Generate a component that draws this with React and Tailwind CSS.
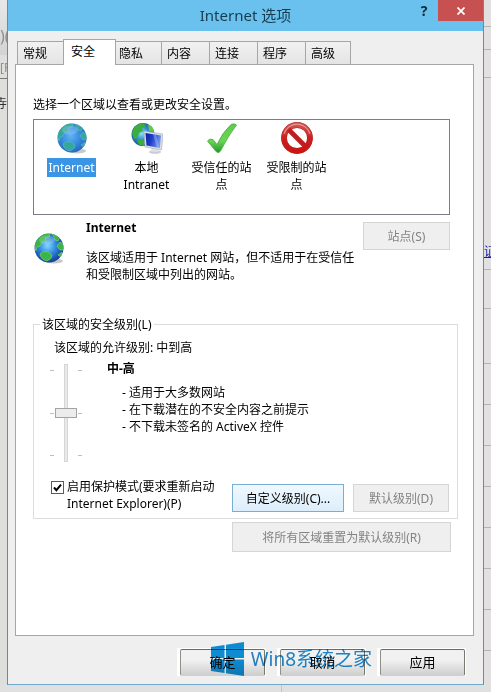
import { useState } from "react";

const tabs = ["常规", "安全", "隐私", "内容", "连接", "程序", "高级"];

const rowLines = [27, 23, 28, 192, 39, 55, 41, 41, 41, 41, 41, 41, 41];

function Globe({ id, light, className }) {
  return (
    <svg viewBox="0 0 32 32" className={className} aria-hidden="true">
      <defs>
        <radialGradient id={id} cx="45%" cy="42%" r="60%">
          <stop offset="0" stopColor={light ? "#5fb4f2" : "#7fd8ff"} />
          <stop offset="0.5" stopColor={light ? "#3a8fe0" : "#2f86dc"} />
          <stop offset="1" stopColor={light ? "#2467bd" : "#143a94"} />
        </radialGradient>
        <clipPath id={`${id}-clip`}>
          <circle cx="16" cy="16" r="14.5" />
        </clipPath>
      </defs>
      <ellipse cx="21" cy="29" rx="9" ry="2.4" fill="#c5c9cd" />
      <circle cx="16" cy="16" r="14.5" fill={`url(#${id})`} />
      <g
        clipPath={`url(#${id}-clip)`}
        fill={light ? "#36a79c" : "#3bb54a"}
        stroke={light ? "#58bfd0" : "#86d86c"}
        strokeWidth="0.6"
      >
        <path d="M1 13 L3 6 L10 1 L17 2 L16 5 L12 6 L13 9 L9 10 L7 14 L4 15 L3 19 Z" />
        <path d="M19 2 L27 5 L25 9 L22 8 L21 5 Z" />
        <path d="M27 10 L31 13 L31 18 L27 18 L24 14 Z" />
        <path d="M7 22 Q10 18 15 20 L19 23 Q19 27 14 29 Q8 28 7 22 Z" />
        <path d="M25 23 L29 20 L28 25 Z" />
      </g>
      <ellipse cx="14" cy="8" rx="8" ry="4.5" fill="#ffffff" opacity="0.18" />
    </svg>
  );
}

function IntranetIcon() {
  return (
    <svg viewBox="0 0 32 32" className="size-8" aria-hidden="true">
      <defs>
        <radialGradient id="lan" cx="45%" cy="45%" r="60%">
          <stop offset="0" stopColor="#8fe0f5" />
          <stop offset="0.5" stopColor="#2f8bd0" />
          <stop offset="1" stopColor="#164c8c" />
        </radialGradient>
        <linearGradient id="screen" x1="0" y1="0" x2="1" y2="0.3">
          <stop offset="0" stopColor="#0b1fa0" />
          <stop offset="0.5" stopColor="#2040cc" />
          <stop offset="1" stopColor="#6f95ea" />
        </linearGradient>
      </defs>
      <circle cx="12" cy="12.5" r="11.5" fill="url(#lan)" />
      <path d="M1 11 Q3 2 12 1 L15 4 L11 6 L12 9 L8 11 L6 16 L3 17 Z" fill="#3dae3c" />
      <path d="M17 2 L22 6 L23 10 L18 9 Z" fill="#64c951" />
      <path d="M6 18 L11 17 L14 20 L13 24 L8 23 Z" fill="#3dae3c" />
      <ellipse cx="24" cy="30" rx="6" ry="1.8" fill="#c9ccd2" />
      <path d="M21 25 L26 26 L27 30 L20 29.5 Z" fill="#e0e2e8" />
      <path d="M13 9 L32 12 L30.5 28 L14 25 Z" fill="#d9dde6" stroke="#a5abb8" strokeWidth="0.6" />
      <path d="M14.5 11 L30 13.5 L28.8 26 L15.5 23.4 Z" fill="url(#screen)" />
      <path d="M22 12.3 L25 12.8 L28.8 26 L26 25.4 Z" fill="#a8c4fa" opacity="0.4" />
    </svg>
  );
}

function CheckIcon() {
  return (
    <svg viewBox="0 0 32 32" className="size-8" aria-hidden="true">
      <defs>
        <linearGradient id="tick" x1="0" y1="0" x2="0" y2="1">
          <stop offset="0" stopColor="#5fcb4c" />
          <stop offset="0.6" stopColor="#6ad455" />
          <stop offset="1" stopColor="#24952a" />
        </linearGradient>
      </defs>
      <path
        d="M1.5 19 Q3.5 16 7 17.5 L11 22.5 Q16 11 25 2.5 Q28 1 30.5 3 Q22 14 14.5 29 Q12.5 32 10 29.5 Z"
        fill="url(#tick)"
        stroke="#46ad3c"
        strokeWidth="0.8"
      />
    </svg>
  );
}

function ForbiddenIcon() {
  return (
    <svg viewBox="0 0 32 32" className="size-8" aria-hidden="true">
      <defs>
        <linearGradient id="ban" x1="0" y1="0" x2="0" y2="1">
          <stop offset="0" stopColor="#d4524f" />
          <stop offset="0.5" stopColor="#c9201f" />
          <stop offset="1" stopColor="#cc1512" />
        </linearGradient>
      </defs>
      <circle cx="16" cy="16" r="13" fill="#ffffff" stroke="#b3262a" strokeWidth="5.8" />
      <circle cx="16" cy="16" r="13" fill="none" stroke="url(#ban)" strokeWidth="4.8" />
      <path d="M7.5 7.5 L24.5 24.5" stroke="#c01d1f" strokeWidth="4.8" />
      <path d="M3 12 A13.5 13.5 0 0 1 29 12" fill="none" stroke="#f0b4b0" strokeWidth="1.2" opacity="0.7" />
    </svg>
  );
}

const zones = [
  { name: "Internet", icon: <Globe id="zone" light className="size-8" /> },
  { name: "本地 Intranet", icon: <IntranetIcon /> },
  { name: "受信任的站点", icon: <CheckIcon /> },
  { name: "受限制的站点", icon: <ForbiddenIcon /> },
];

function GrayButton({ className, children }) {
  return (
    <button
      type="button"
      disabled
      className={`border border-[#d5d5d5] bg-[#efefef] text-[#838383] ${className}`}
    >
      {children}
    </button>
  );
}

function FooterButton({ children }) {
  return (
    <div className="bg-white pt-px pr-px pl-[3px]">
      <button
        type="button"
        className="h-[27px] w-[85px] rounded-xs border border-t-[#6c6c5e] border-r-[#77776c] border-b-[#d0d0d0] border-l-[#8f8f88] bg-linear-to-b from-[#f1f1f1] from-40% to-[#cfcfcf] text-[13px] text-black"
      >
        {children}
      </button>
    </div>
  );
}

function Ticks() {
  return (
    <div className="flex w-1 flex-col justify-between py-1.5">
      <span className="h-px bg-[#bdbdbd]" />
      <span className="h-px bg-[#bdbdbd]" />
      <span className="h-px bg-[#bdbdbd]" />
    </div>
  );
}

function App() {
  const [tab, setTab] = useState("安全");
  const [zone, setZone] = useState("Internet");
  const [level, setLevel] = useState(3);
  const [protectedMode, setProtectedMode] = useState(true);

  return (
    <div className="grid min-h-screen grid-cols-[7px_minmax(0,1fr)_7px] grid-rows-[1fr_7px] overflow-hidden bg-[#e2e2e2] font-['Noto_Sans','Noto_Sans_CJK_SC',sans-serif] text-[12px] leading-[17px] text-black">
      {/* page behind the dialog, left edge */}
      <div className="overflow-hidden bg-[#dededd] text-[#8f8f8f]" aria-hidden="true">
        <div className="h-[55px] bg-linear-to-b from-[#e8e8e8] to-[#d2d4d3] pt-7 text-[16px] whitespace-nowrap">)(</div>
        <div className="h-6 border-b border-[#777777] pt-1 whitespace-nowrap">[F</div>
        <div className="flex justify-end pt-4 text-[#333333]">寺</div>
      </div>

      <main className="flex flex-col border-x border-b border-l-[#5c8db5] border-r-[#5c9396] border-b-[#6fa9cc] bg-[#efefef]">
        <header className="relative flex h-[31px] items-center justify-center bg-[#6bc1ee]">
          <h1 className="text-[15px] text-[#173c50]">Internet 选项</h1>
          <div className="absolute top-0 right-0 flex">
            <button type="button" aria-label="帮助" className="h-[21px] w-7 text-[14px] font-bold text-[#102a38]">
              ?
            </button>
            <button
              type="button"
              aria-label="关闭"
              className="flex h-[21px] w-[45px] items-center justify-center bg-[#c75050]"
            >
              <svg viewBox="0 0 8 8" className="size-2" aria-hidden="true">
                <path d="M0.5 0.5 L7.5 7.5 M7.5 0.5 L0.5 7.5" stroke="#ffffff" strokeWidth="1.7" />
              </svg>
            </button>
          </div>
        </header>

        <nav className="flex items-end pt-2 pl-[9px]" role="tablist">
          {tabs.map((name) => (
            <button
              key={name}
              type="button"
              role="tab"
              aria-selected={tab === name}
              onClick={() => setTab(name)}
              className={
                tab === name
                  ? "z-10 -mr-0.5 -mb-px -ml-px h-[26px] w-[53px] border border-b-0 border-[#a5a5aa] bg-white pb-0.5 pl-[7px] text-left"
                  : "-ml-px h-[23px] w-[49px] border border-b-0 border-[#a5a5aa] bg-linear-to-b from-[#f1f1f1] to-[#e4e4e4] pl-[5px] text-left first:ml-0 first:w-[47px] last:w-[46px]"
              }
            >
              {name}
            </button>
          ))}
        </nav>

        <section className="mr-[9px] ml-[7px] flex grow flex-col border border-[#a5a5aa] bg-white pt-[31px] pr-[15px] pb-[82px] pl-[17px]">
          <p>选择一个区域以查看或更改安全设置。</p>

          <div className="mt-1.5 mr-2 flex h-24 border border-[#7b7f85] pt-0.5" role="listbox">
            {zones.map((item) => (
              <button
                key={item.name}
                type="button"
                role="option"
                aria-selected={zone === item.name}
                onClick={() => setZone(item.name)}
                className="flex w-[75px] flex-col items-center gap-1"
              >
                {item.icon}
                <span
                  className={
                    zone === item.name
                      ? "bg-[#3a96e4] px-px py-px text-white"
                      : "max-w-[62px] py-px"
                  }
                >
                  {item.name}
                </span>
              </button>
            ))}
          </div>

          <div className="mr-2 flex items-start">
            <Globe id="current" className="mt-[17px] size-8" />
            <div className="ml-[21px] grow pt-1">
              <h2 className="font-bold">Internet</h2>
              <p className="mt-[13px] whitespace-nowrap">
                该区域适用于 Internet 网站，但不适用于在受信任
                <br />
                和受限制区域中列出的网站。
              </p>
            </div>
            <GrayButton className="mt-[7px] h-7 w-[87px] shrink-0">站点(S)</GrayButton>
          </div>

          <fieldset className="mt-[33px] border border-[#dcdcdc] pr-2 pb-1.5 pl-4">
            <legend className="-ml-2.5 px-0.5">该区域的安全级别(L)</legend>
            <p className="pt-1.5 pl-1">该区域的允许级别: 中到高</p>

            <div className="flex pt-2">
              <div className="flex h-[98px] w-8 justify-between">
                <Ticks />
                <input
                  type="range"
                  min="1"
                  max="5"
                  value={level}
                  onChange={(e) => setLevel(Number(e.target.value))}
                  aria-label="安全级别"
                  className="h-full w-[22px] appearance-none bg-transparent [direction:rtl] [writing-mode:vertical-lr] [&::-webkit-slider-runnable-track]:h-full [&::-webkit-slider-runnable-track]:w-1 [&::-webkit-slider-runnable-track]:border [&::-webkit-slider-runnable-track]:border-[#d6d6d6] [&::-webkit-slider-runnable-track]:bg-[#e7eaea] [&::-webkit-slider-thumb]:-ml-[10px] [&::-webkit-slider-thumb]:h-[10px] [&::-webkit-slider-thumb]:w-[22px] [&::-webkit-slider-thumb]:appearance-none [&::-webkit-slider-thumb]:border [&::-webkit-slider-thumb]:border-[#a3a3a3] [&::-webkit-slider-thumb]:bg-[#ececec]"
                />
                <Ticks />
              </div>
              <div className="-mt-1 ml-[25px]">
                <h3 className="font-bold">中-高</h3>
                <ul className="mt-[7px] pl-[15px]">
                  <li>- 适用于大多数网站</li>
                  <li>- 在下载潜在的不安全内容之前提示</li>
                  <li>- 不下载未签名的 ActiveX 控件</li>
                </ul>
              </div>
            </div>

            <div className="flex items-end pt-4">
              <div className="flex grow items-start gap-[3px]">
                <span className="relative mt-[3px] ml-px flex size-[13px] shrink-0">
                  <input
                    id="protected-mode"
                    type="checkbox"
                    checked={protectedMode}
                    onChange={(e) => setProtectedMode(e.target.checked)}
                    className="size-[13px] appearance-none border border-[#5c5c5c] bg-white"
                  />
                  {protectedMode && (
                    <svg viewBox="0 0 13 13" className="pointer-events-none absolute inset-0" aria-hidden="true">
                      <path d="M3 6.5 L5.4 9.2 L10 3.6" fill="none" stroke="#000000" strokeWidth="2" />
                    </svg>
                  )}
                </span>
                <label htmlFor="protected-mode" className="whitespace-nowrap">
                  启用保护模式(要求重新启动
                  <br />
                  Internet Explorer)(P)
                </label>
              </div>
              <button
                type="button"
                className="h-7 w-28 shrink-0 border border-[#78aed0] bg-linear-to-b from-[#f0f8fe] to-[#dceefb]"
              >
                自定义级别(C)...
              </button>
              <GrayButton className="ml-[9px] h-7 w-24 shrink-0">默认级别(D)</GrayButton>
            </div>
          </fieldset>

          <GrayButton className="mt-[3px] mr-[7px] h-[30px] w-[219px] self-end">
            将所有区域重置为默认级别(R)
          </GrayButton>
        </section>

        <footer className="relative flex justify-end gap-[11px] pt-3 pr-[17px] pb-2">
          <FooterButton>确定</FooterButton>
          <FooterButton>取消</FooterButton>
          <FooterButton>应用</FooterButton>
          <div className="pointer-events-none absolute top-1.5 right-[111px] flex items-center gap-[7px] mix-blend-multiply">
            <svg viewBox="0 0 33 34" className="h-[34px] w-[33px]" aria-hidden="true">
              <path
                d="M0 5 L13.5 3 V16 H0 Z M15 2.7 L33 0 V16 H15 Z M0 17.5 H13.5 V31 L0 29 Z M15 17.5 H33 V34 L15 31.3 Z"
                fill="#0f93dd"
              />
            </svg>
            <span className="text-[19px] whitespace-nowrap text-[#2189cf]">Win8系统之家</span>
          </div>
        </footer>
      </main>

      {/* page behind the dialog, right edge */}
      <div className="relative overflow-hidden bg-[#e2e0e1]" aria-hidden="true">
        {rowLines.map((height, i) => (
          <div key={i} className="border-b border-[#b5b3b4]" style={{ height }} />
        ))}
        <span className="absolute top-[243px] left-0 text-[#1a1aa6] underline">证</span>
      </div>

      <div className="col-span-3 flex bg-[#e0e0e0]">
        <span className="w-[282px] border-r border-[#c4c4c4]" />
      </div>
    </div>
  );
}

export default App;
